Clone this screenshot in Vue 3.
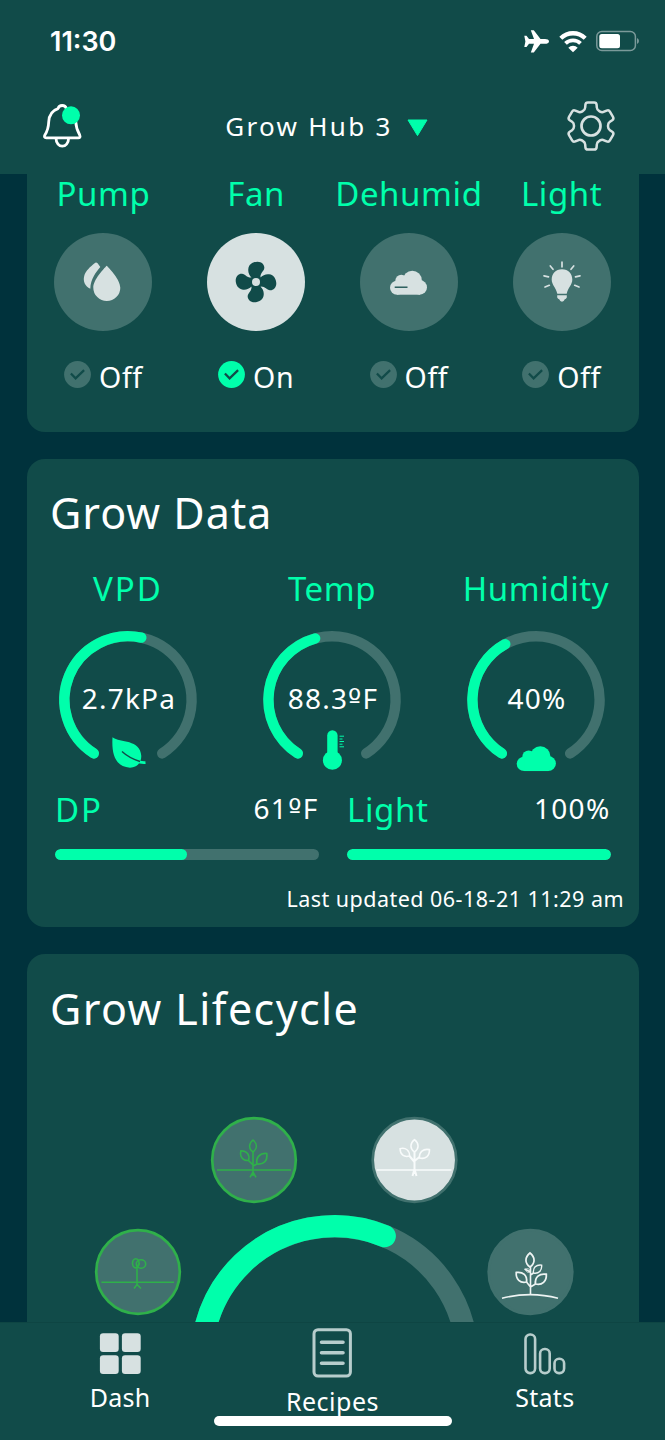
<script setup>
const devices = [
  { name: 'Pump', icon: 'pump', on: false },
  { name: 'Fan', icon: 'fan', on: true },
  { name: 'Dehumid', icon: 'cloud', on: false },
  { name: 'Light', icon: 'bulb', on: false }
]

const gauges = [
  { name: 'VPD', value: '2.7kPa', icon: 'leaf', ratio: 0.541 },
  { name: 'Temp', value: '88.3ºF', icon: 'thermometer', ratio: 0.448 },
  { name: 'Humidity', value: '40%', icon: 'cloud', ratio: 0.402 }
]

const bars = [
  { name: 'DP', value: '61ºF', percent: 50 },
  { name: 'Light', value: '100%', percent: 100 }
]

// leaves are drawn from their base, [x, y, rotation, scale]
const stages = [
  { x: 254, y: 1160, state: 'done', stem: 'M-1 -8V16M-1 5L-5.5 .5M-1 6L3 4M-4 17.3L-1 12L2 17.3', ground: 'M-37 10H37', leaves: [[-1, -8, 0, 0.92], [-5.5, 0.5, -38, 0.95], [3, 4, 43, 1.1]] },
  { x: 414.5, y: 1160, state: 'current', stem: 'M0 -8V14M0 2L-5 -4M0 1L5 -3M-2 16L0 9L2 16', ground: 'M-38 10H37', leaves: [[0, -8, 0, 0.95], [-5, -4, -52, 0.92], [5, -2, 50, 1]] },
  { x: 530.5, y: 1272, state: 'next', stem: 'M0 -5V23M0 15L-4 10M0 15L5 12M0 3L3 1M0 0L-6 -3', ground: 'M-28.5 26.3Q0 19 27.5 26.3', leaves: [[-0.5, -5, 0, 1.08], [3, 1, 46, 0.87], [-4, 10, -47, 1.08], [5, 12, 48, 1.12], [0, 0, -60, 0.45]] }
]

// keeps the ordinal sign apart so it can take its own font
const parts = value => value.split(/(º)/)

function point(cx, cy, r, deg) {
  const a = deg * Math.PI / 180
  return `${(cx + r * Math.sin(a)).toFixed(2)} ${(cy - r * Math.cos(a)).toFixed(2)}`
}

function arc(cx, cy, r, from, to) {
  return `M${point(cx, cy, r, from)}A${r} ${r} 0 ${to - from > 180 ? 1 : 0} 1 ${point(cx, cy, r, to)}`
}

const START = -147.5
const SWEEP = 295
const gaugeArc = ratio => arc(70, 69.8, 63.6, START, START + SWEEP * ratio)

function gearPath() {
  const tooth = [[-6, -16.2], [-5.4, -23.6], [5.4, -23.6], [6, -16.2]]
  const pts = []
  for (let i = 0; i < 6; i++) {
    const a = i * Math.PI / 3
    tooth.forEach(([x, y]) => pts.push([x * Math.cos(a) - y * Math.sin(a), x * Math.sin(a) + y * Math.cos(a)]))
  }
  const toward = (p, q, d) => {
    const len = Math.hypot(q[0] - p[0], q[1] - p[1])
    return [p[0] + (q[0] - p[0]) * d / len, p[1] + (q[1] - p[1]) * d / len]
  }
  return pts.map((p, i) => {
    const before = toward(p, pts[(i + 23) % 24], 2.3)
    const after = toward(p, pts[(i + 1) % 24], 2.3)
    return `${i ? 'L' : 'M'}${before}Q${p} ${after}`
  }).join('') + 'Z'
}
</script>

<template>
  <main class="screen">
    <header class="top">
      <div class="status-bar">
        <span class="clock">11:30</span>
        <div class="status-icons">
          <svg width="26" height="23" viewBox="0 0 26 23"><path fill="#fff" d="M25 11.4C25 13 23 13.8 21 13.8H16.5L9.8 22.6H6.8L10 13.8H5L2.5 17H.3L1.4 11.4L.3 5.8H2.5L5 9H10L6.8 .2H9.8L16.5 9H21C23 9 25 9.8 25 11.4Z" /></svg>
          <svg class="wifi" width="28" height="23" viewBox="0 0 28 23">
            <path d="M1.8 8.2A17.5 17.5 0 0 1 26.2 8.2" fill="none" stroke="#fff" stroke-width="4.3" />
            <path d="M6.5 13.4A10.8 10.8 0 0 1 21.5 13.4" fill="none" stroke="#fff" stroke-width="3.9" />
            <path d="M14 22.3L9.3 17.8A6.4 6.4 0 0 1 18.7 17.8Z" fill="#fff" />
          </svg>
          <svg width="44" height="22" viewBox="0 0 44 22">
            <rect x=".8" y="1.6" width="38.6" height="18.8" rx="5" fill="none" stroke="#7b9a9a" stroke-width="1.5" />
            <rect x="3.3" y="3.9" width="20.7" height="14.4" rx="2.5" fill="#fff" />
            <path d="M41 8V14Q43 13 43 11T41 8Z" fill="#7b9a9a" />
          </svg>
        </div>
      </div>
      <div class="title-bar">
        <svg width="44" height="52" viewBox="0 0 44 52">
          <g fill="none" stroke="#fff" stroke-width="2.8" stroke-linejoin="round">
            <path d="M18 8.6A4.4 4.4 0 0 1 26.4 8.6C32 10 35.6 15 35.8 22C36 28 37.5 31 39.7 35C40.6 37 39.8 37.8 38.2 37.8H6.3C4.6 37.8 3.9 36.8 4.9 35C7.4 31 8.5 28 8.7 22C9 15 12.4 10.4 18 8.6Z" />
            <path d="M16 38C16 48.8 28.6 48.8 28.6 38" />
          </g>
          <circle cx="31" cy="15.3" r="9" fill="#00ffab" />
        </svg>
        <div class="hub">
          <span class="hub-name">Grow Hub 3</span>
          <svg width="21" height="18" viewBox="0 0 21 18"><path d="M1 1H20L10.5 16.6Z" fill="#00ffab" stroke="#00ffab" stroke-linejoin="round" /></svg>
        </div>
        <svg width="52" height="52" viewBox="-26 -26 52 52">
          <g fill="none" stroke="#d7e1e1">
            <path :d="gearPath()" stroke-width="2.5" />
            <circle r="9.5" stroke-width="2.7" />
          </g>
        </svg>
      </div>
    </header>

    <svg class="defs" width="0" height="0">
      <g id="cloud">
        <circle cx="37" cy="54.7" r="7" />
        <circle cx="41.3" cy="47.8" r="6" />
        <circle cx="52.3" cy="47.2" r="9.5" />
        <circle cx="59.7" cy="54.4" r="7.3" />
        <rect x="37" y="49" width="23" height="12.7" />
      </g>
      <path id="sprout-leaf" d="M0 0C-5 -3.5 -5 -9 0 -13C5 -9 5 -3.5 0 0Z" />
    </svg>

    <section class="card devices">
      <article v-for="device in devices" :key="device.name" class="device">
        <h3 class="label">{{ device.name }}</h3>
        <div class="device-button" :class="{ on: device.on }">
          <svg width="98" height="98" viewBox="0 0 98 98" fill="#d7e1e1">
            <g v-if="device.icon === 'pump'">
              <path d="M40.6 30.3Q42 28.6 43.6 30.3L46.3 33.9C42 39 36.5 46 36.3 55.8C31 53.5 28.8 48 30.2 43C31.6 38 36.5 33.5 40.6 30.3Z" />
              <path d="M52.7 32.7C55.5 35.5 66.3 46.5 66.3 54.7A13.5 13.3 0 0 1 39.3 54.7C39.3 46.5 50 35.5 52.7 32.7Z" />
            </g>
            <g v-else-if="device.icon === 'fan'" transform="translate(49 49)">
              <path v-for="turn in [0, 90, 180, 270]" :key="turn" :transform="`rotate(${turn})`" fill="#114b49" d="M-4 -4C-7 -7 -8 -9.5 -7.7 -13C-7.2 -18 -2.5 -20.3 1.5 -20.3C6 -20.3 8.6 -17 8.3 -14C8 -10.5 4 -9.5 4.5 -4Z" />
              <circle r="6.5" fill="#114b49" />
              <circle r="4" />
            </g>
            <g v-else-if="device.icon === 'cloud'">
              <use href="#cloud" />
              <path d="M34.7 54.2H47.5" stroke="#114b49" stroke-width="1.3" />
            </g>
            <g v-else>
              <path d="M49 36.3C55.5 36.3 59.3 41 59.3 46.6C59.3 52 55.2 54.5 53.7 60.8H44.3C42.8 54.5 38.7 52 38.7 46.6C38.7 41 42.5 36.3 49 36.3Z" />
              <path d="M44.2 62.2H53.8V64.5Q53 66 51.8 66.3Q51 68.7 49 68.7T46.2 66.3Q45 66 44.2 64.5Z" />
              <path d="M49 29.2V33.8M37.3 33L40 36.3M60.7 33L58 36.3M31 42.8L35.5 43.8M67 42.8L62.5 43.8M32 54L36.3 52.3M66 54L61.7 52.3" stroke="#d7e1e1" stroke-width="1.7" stroke-linecap="round" />
            </g>
          </svg>
        </div>
        <div class="device-state">
          <svg width="27" height="27" viewBox="0 0 27 27">
            <circle cx="13.5" cy="13.5" r="13.4" :fill="device.on ? '#00ffab' : '#41716e'" />
            <path d="M6.9 12.5L11.6 17.3L20.1 9.2" fill="none" stroke="#114b49" stroke-width="2.3" />
          </svg>
          <span>{{ device.on ? 'On' : 'Off' }}</span>
        </div>
      </article>
    </section>

    <section class="card data">
      <h2 class="data-title">Grow Data</h2>
      <div class="gauges">
        <article v-for="gauge in gauges" :key="gauge.name" class="gauge">
          <h3 class="label" :class="{ caps: gauge.name === 'VPD' }">{{ gauge.name }}</h3>
          <svg class="gauge-dial" width="140" height="140" viewBox="0 0 140 140">
            <g fill="none" stroke-width="10.4" stroke-linecap="round">
              <path :d="gaugeArc(1)" stroke="#41716e" />
              <path :d="gaugeArc(gauge.ratio)" stroke="#00ffab" />
            </g>
            <text x="71" y="79.4" text-anchor="middle" class="gauge-value"><tspan v-for="part in parts(gauge.value)" :key="part" :class="{ ordinal: part === 'º' }">{{ part }}</tspan></text>
            <g v-if="gauge.icon === 'leaf'">
              <path d="M54.5 107.3C62 113 82.5 109 83.3 126C83.3 133.5 78 137.7 72 137.7C57 136.5 53.5 124 54.5 107.3Z" fill="#00ffab" />
              <path d="M78 130.5Q82 133 87.5 132.6" fill="none" stroke="#00ffab" stroke-width="2.8" />
              <path d="M64 121.5Q71 128 82 131.5" fill="none" stroke="#114b49" stroke-width="1.4" />
            </g>
            <g v-else-if="gauge.icon === 'thermometer'" fill="#00ffab">
              <rect x="65.2" y="100.3" width="10.4" height="30" rx="5.2" />
              <circle cx="70.4" cy="130.3" r="9.5" />
              <path d="M77.5 106.2H82M77.5 109H80.5M77.5 111.5H82M77.5 114.2H80.5M77.5 116.8H82" stroke="#00ffab" stroke-width="1" />
            </g>
            <use v-else href="#cloud" fill="#00ffab" transform="translate(18.9 77.5) scale(1.06 1.03)" />
          </svg>
        </article>
      </div>
      <div class="bars">
        <article v-for="bar in bars" :key="bar.name" class="bar">
          <div class="bar-head">
            <h3 class="label" :class="{ caps: bar.name === 'DP' }">{{ bar.name }}</h3>
            <span class="bar-value"><span v-for="part in parts(bar.value)" :key="part" :class="{ ordinal: part === 'º' }">{{ part }}</span></span>
          </div>
          <div class="bar-track"><div class="bar-fill" :style="{ width: bar.percent + '%' }"></div></div>
        </article>
      </div>
      <p class="updated">Last updated 06-18-21 11:29 am</p>
    </section>

    <section class="card lifecycle">
      <h2 class="lifecycle-title">Grow Lifecycle</h2>
      <svg class="lifecycle-dial" width="612" height="222" viewBox="27 1100 612 222">
        <g fill="none" stroke-width="22.4" stroke-linecap="round">
          <path :d="arc(334.5, 1359, 132.8, -110, 110)" stroke="#41716e" />
          <path :d="arc(334.5, 1359, 132.8, -110, 22.2)" stroke="#00ffab" />
        </g>
        <g class="stage done" transform="translate(138 1272)">
          <circle class="disc" r="41.8" />
          <path d="M-36.6 10.3H36M-1 -7V14M-4 16.5L-1 12.5L3 16.5M-1 -5L1.5 -9" />
          <ellipse cx="-2.2" cy="-8.7" rx="3.3" ry="4.6" />
          <ellipse cx="3" cy="-8" rx="4.7" ry="4.2" />
        </g>
        <g v-for="stage in stages" :key="stage.x" class="stage" :class="stage.state" :transform="`translate(${stage.x} ${stage.y})`">
          <circle class="disc" r="41.8" />
          <path :d="stage.ground" />
          <path class="stem" :d="stage.stem" />
          <use v-for="([x, y, turn, size], i) in stage.leaves" :key="i" href="#sprout-leaf" :transform="`translate(${x} ${y}) rotate(${turn}) scale(${size})`" />
        </g>
      </svg>
    </section>

    <nav class="tabs">
      <a class="tab">
        <svg width="42" height="42" viewBox="0 0 42 42" fill="#d7e1e1">
          <rect x=".9" y=".2" width="18.8" height="18.8" rx="3.2" />
          <rect x="22.9" y=".2" width="18.8" height="18.8" rx="3.2" />
          <rect x=".9" y="22.2" width="18.8" height="18.8" rx="3.2" />
          <rect x="22.9" y="22.2" width="18.8" height="18.8" rx="3.2" />
        </svg>
        <span>Dash</span>
      </a>
      <a class="tab recipes">
        <svg width="40" height="50" viewBox="0 0 40 50" fill="none" stroke="#b7cdcc">
          <rect x="2" y="1.7" width="36.4" height="46.4" rx="4" stroke-width="3" />
          <path d="M9.5 14.2H31M9.5 24.8H31M9.5 35.3H31" stroke-width="3.6" stroke-linecap="round" />
        </svg>
        <span>Recipes</span>
      </a>
      <a class="tab">
        <svg width="42" height="42" viewBox="0 0 42 42" fill="none" stroke="#b7cdcc" stroke-width="2.6">
          <rect x="1.5" y="1.5" width="9.6" height="38.6" rx="4.5" />
          <rect x="16.1" y="16" width="9.6" height="24.1" rx="4.5" />
          <rect x="30.5" y="25.8" width="9.6" height="14.3" rx="4.5" />
        </svg>
        <span>Stats</span>
      </a>
      <div class="home-indicator"></div>
    </nav>
  </main>
</template>

<style>
body { background:#00323c; }
</style>

<style scoped>
.screen { display:flex; flex-direction:column; width:665px; height:1440px; overflow:hidden; background:#00323c; color:#fff; font-family:"Noto Sans", "Open Sans", sans-serif; }
h2,h3,p { margin:0; font-weight:400; }
svg { display:block; flex:none; }
.defs { position:absolute; }
.ordinal { font-family:"DejaVu Sans", sans-serif; }

.top { flex:none; height:174px; background:#114b49; }
.status-bar { display:flex; justify-content:space-between; align-items:center; height:82px; padding:0 25px 0 50px; }
.clock { padding-top:1px; font:600 27px/32px Inter, sans-serif; }
.status-icons { display:flex; align-items:center; }
.wifi { margin:0 9px; }
.title-bar { display:flex; justify-content:space-between; align-items:center; height:87px; padding:0 48px 0 40px; }
.hub { display:flex; align-items:center; gap:14px; margin-left:4px; padding-top:1px; }
.hub-name { font-size:26px; line-height:36px; letter-spacing:2.3px; }
.hub svg { margin-top:4px; }

.card { flex:none; box-sizing:border-box; width:612px; margin:0 26px 27px 27px; border-radius:18px; background:#114b49; }
.label { padding-top:2px; color:#00ffab; font-size:33px; line-height:36px; letter-spacing:.6px; }
.label.caps { letter-spacing:2px; }
.devices { display:grid; grid-template-columns:repeat(4, 1fr); height:258px; padding-right:1px; border-radius:0 0 18px 18px; }
.device { display:flex; flex-direction:column; align-items:center; }
.device-button { width:98px; height:98px; margin:21px 0 26px; border-radius:50%; background:#41716e; }
.device-button.on { background:#d7e1e1; }
.device-state { display:flex; align-items:center; gap:8px; font-size:28.5px; line-height:40px; letter-spacing:.6px; }
.device-state svg { margin-bottom:5px; }

.data { height:468px; }
.data-title,.lifecycle-title { padding:29px 0 0 23px; font-size:43px; line-height:50px; letter-spacing:1px; }
.lifecycle-title { padding-top:30px; letter-spacing:1.4px; }
.gauges { display:grid; grid-template-columns:repeat(3, 204px); margin:31px 0 0 -1.5px; }
.gauge { display:flex; flex-direction:column; align-items:center; }
.gauge .label { padding-left:1px; }
.gauge-dial { margin-top:23px; overflow:visible; }
.gauge-value { fill:#fff; font-size:28px; letter-spacing:1.2px; }
.bars { display:grid; grid-template-columns:1fr 1fr; gap:28.5px; padding:20px 28.5px 0 28px; }
.bar-head { display:flex; justify-content:space-between; height:38px; }
.bar-value { font-size:28px; line-height:36px; letter-spacing:1.3px; }
.bar-track { height:11px; margin-top:21px; border-radius:6px; overflow:hidden; background:#41716e; }
.bar-fill { height:100%; border-radius:6px; background:#00ffab; }
.updated { padding:25px 15px 0 0; font-size:21.5px; line-height:28px; letter-spacing:.47px; text-align:right; }

.lifecycle { height:368px; margin-bottom:0; border-radius:18px 18px 0 0; }
.lifecycle-dial { margin-top:66px; }
.stage { fill:none; stroke-width:1.6; }
.stage .disc { fill:#41716e; stroke-width:2.7; }
.done { stroke:#2fb04a; }
.current { stroke:#f8fbfb; }
.current .disc { fill:#d7e1e1; stroke:#41716e; }
.current .stem { stroke-width:2; }
.next { stroke:#eef4f3; }
.next .disc { stroke:#41716e; }

.tabs { position:relative; flex:none; display:grid; grid-template-columns:repeat(3, 1fr); height:118px; padding:0 14px; background:#114b49; box-shadow:inset 0 1px #0e4543; }
.tab { display:flex; flex-direction:column; align-items:center; padding-top:11px; font-size:25px; line-height:30px; letter-spacing:.3px; }
.tab span { margin-top:7px; }
.tab.recipes { padding-top:6px; letter-spacing:.5px; }
.tab.recipes span { margin-top:8px; }
.home-indicator { position:absolute; left:214px; bottom:14px; width:238px; height:10px; border-radius:5px; background:#fff; }
</style>
